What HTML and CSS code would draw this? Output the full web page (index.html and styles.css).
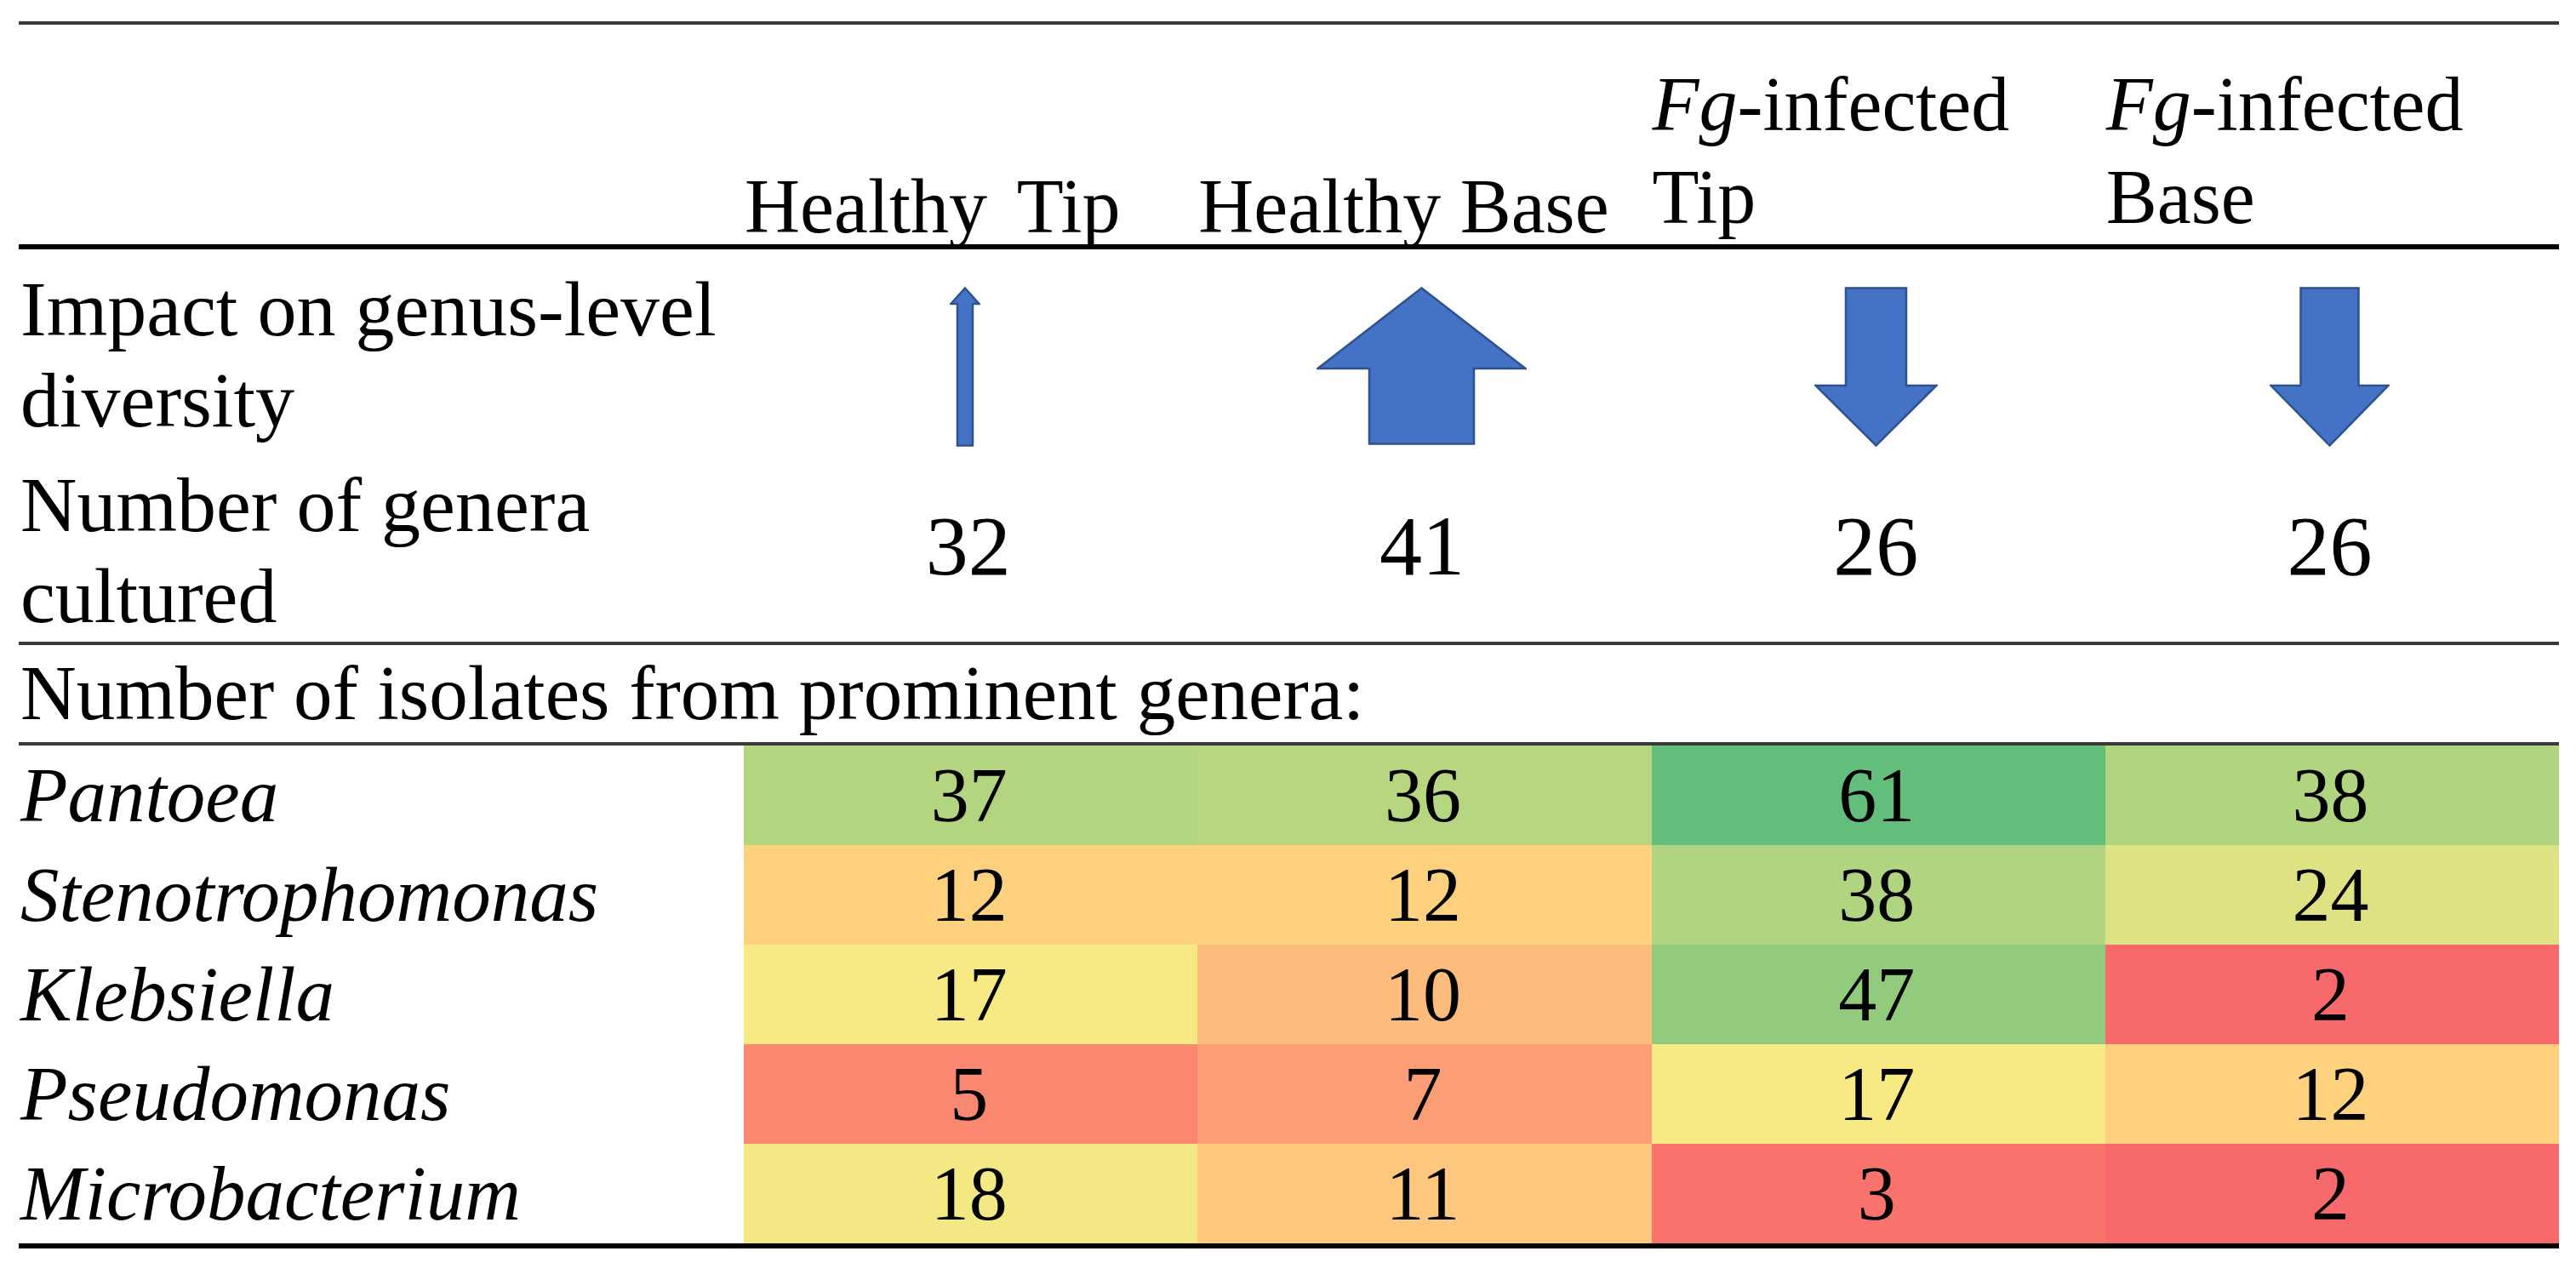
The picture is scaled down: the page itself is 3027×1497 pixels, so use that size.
FILE: index.html
```html
<!DOCTYPE html>
<html lang="en">
<head>
<meta charset="utf-8">
<title>Genus-level diversity table</title>
<link rel="stylesheet" href="styles.css">
</head>
<body>
<div class="table">
  <div class="row head">
    <div class="cell"></div>
    <div class="cell hd one"><span class="wide">Healthy Tip</span></div>
    <div class="cell hd one">Healthy Base</div>
    <div class="cell hd"><i>Fg</i>-infected<br>Tip</div>
    <div class="cell hd"><i>Fg</i>-infected<br>Base</div>
  </div>

  <div class="row impact">
    <div class="label">Impact on genus-level<br>diversity</div>
    <div class="arrow a1">
      <svg width="36" height="188" viewBox="0 0 36 188"><polygon points="18,1.5 34.5,20 27,20 27,186.5 9,186.5 9,20 1.5,20" /></svg>
    </div>
    <div class="arrow">
      <svg width="247" height="186" viewBox="0 0 247 186"><polygon points="123.5,1.5 245.5,96 185,96 185,184.5 62,184.5 62,96 1.5,96" /></svg>
    </div>
    <div class="arrow">
      <svg width="145" height="188" viewBox="0 0 145 188"><polygon points="37,1.5 108,1.5 108,116 143.5,116 72.5,186.5 1.5,116 37,116" /></svg>
    </div>
    <div class="arrow">
      <svg width="141" height="188" viewBox="0 0 141 188"><polygon points="36.5,1.5 104.5,1.5 104.5,116 139.5,116 70.5,186.5 1.5,116 36.5,116" /></svg>
    </div>
  </div>

  <div class="row genera">
    <div class="label">Number of genera<br>cultured</div>
    <div class="num">32</div>
    <div class="num">41</div>
    <div class="num">26</div>
    <div class="num">26</div>
  </div>

  <div class="row isolates">
    <div class="span">Number of isolates from prominent genera:</div>
  </div>

  <div class="heat">
    <div class="row hrow">
      <div class="genus">Pantoea</div>
      <div class="val" style="background:#b3d580">37</div>
      <div class="val" style="background:#b7d680">36</div>
      <div class="val" style="background:#63be7b">61</div>
      <div class="val" style="background:#b0d47f">38</div>
    </div>
    <div class="row hrow">
      <div class="genus">Stenotrophomonas</div>
      <div class="val" style="background:#fed17f">12</div>
      <div class="val" style="background:#fed17f">12</div>
      <div class="val" style="background:#b0d47f">38</div>
      <div class="val" style="background:#dfe282">24</div>
    </div>
    <div class="row hrow">
      <div class="genus">Klebsiella</div>
      <div class="val" style="background:#f7e984">17</div>
      <div class="val" style="background:#fdbc7b">10</div>
      <div class="val" style="background:#92cb7e">47</div>
      <div class="val" style="background:#f8696b">2</div>
    </div>
    <div class="row hrow">
      <div class="genus">Pseudomonas</div>
      <div class="val" style="background:#fa8871">5</div>
      <div class="val" style="background:#fb9d75">7</div>
      <div class="val" style="background:#f7e984">17</div>
      <div class="val" style="background:#fed17f">12</div>
    </div>
    <div class="row hrow">
      <div class="genus">Microbacterium</div>
      <div class="val" style="background:#f3e883">18</div>
      <div class="val" style="background:#fdc77d">11</div>
      <div class="val" style="background:#f9736d">3</div>
      <div class="val" style="background:#f8696b">2</div>
    </div>
  </div>
</div>
</body>
</html>
```

FILE: styles.css
```css
* {
  box-sizing: border-box;
}

html, body {
  margin: 0;
  padding: 0;
  background: #ffffff;
}

body {
  font-family: "Liberation Serif", "Times New Roman", serif;
  color: #000000;
  font-size: 90px;
}

.table {
  width: 2985px;
  margin: 25px 0 0 22px;
  border-top: 4px solid #3a3a3a;
  border-bottom: 6px solid #000000;
}

.row {
  display: grid;
  grid-template-columns: 852px repeat(4, minmax(0, 1fr));
}

/* header */
.head {
  padding: 39px 0 1px;
  border-bottom: 6px solid #000000;
  align-items: end;
}

.hd {
  line-height: 109px;
  padding-left: 1px;
  white-space: nowrap;
}

.hd.one {
  line-height: 87px;
}

.wide {
  word-spacing: 14px;
}

/* label column */
.label {
  font-size: 92px;
  line-height: 107px;
  padding-left: 2px;
  white-space: nowrap;
}

/* impact row */
.impact {
  padding: 17px 0 2px;
}

.arrow {
  display: flex;
  justify-content: center;
  align-items: flex-start;
  padding-top: 27px;
  padding-right: 6px;
}

.arrow.a1 {
  padding-right: 14px;
}

.arrow svg {
  display: block;
}

.arrow polygon {
  fill: #4472c4;
  stroke: #2f528f;
  stroke-width: 2.5;
  stroke-linejoin: miter;
}

/* genera row */
.genera {
  padding-top: 13px;
  border-bottom: 4px solid #3a3a3a;
}

.num {
  display: flex;
  justify-content: center;
  align-items: center;
  font-size: 100px;
  line-height: 107px;
  padding-right: 6px;
  padding-bottom: 12px;
}

/* isolates row */
.isolates {
  padding: 3px 0 4px;
  border-bottom: 4px solid #3a3a3a;
}

.span {
  grid-column: 1 / -1;
  font-size: 91px;
  line-height: 107px;
  padding-left: 2px;
  white-space: nowrap;
}

/* heatmap */
.hrow {
  height: 117px;
}

.genus {
  font-style: italic;
  font-size: 91px;
  line-height: 117px;
  padding-left: 2px;
  white-space: nowrap;
}

.val {
  line-height: 117px;
  text-align: center;
  padding-right: 4px;
}
```
